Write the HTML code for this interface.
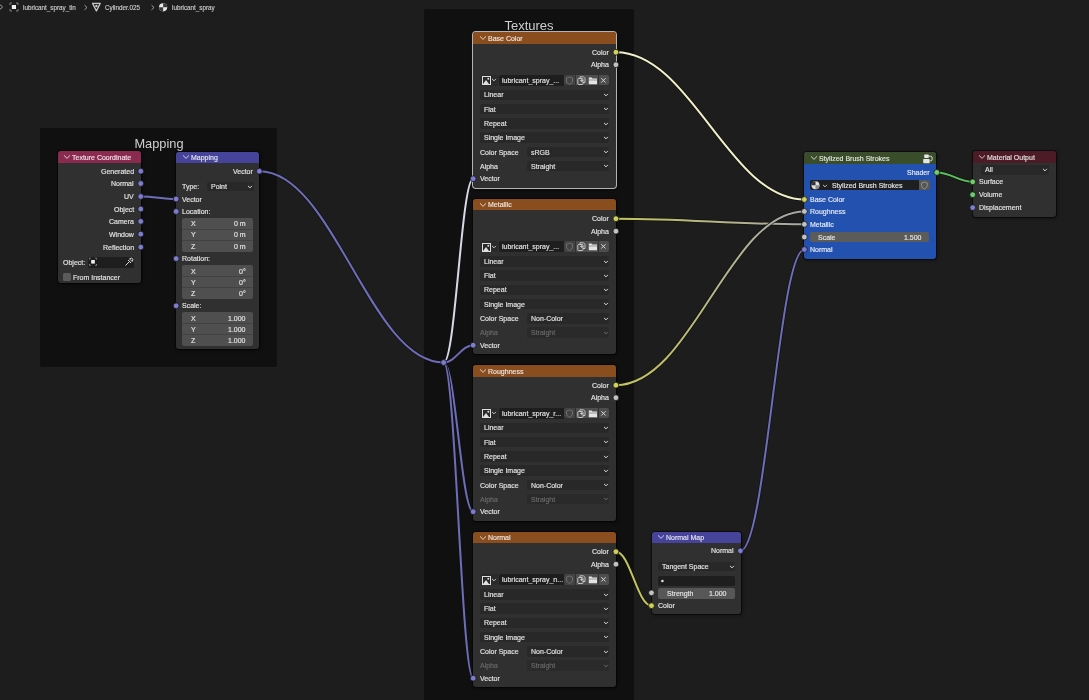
<!DOCTYPE html><html><head><meta charset="utf-8"><style>
html,body{margin:0;padding:0;width:1089px;height:700px;overflow:hidden;background:#1d1d1d;font-family:"Liberation Sans",sans-serif;}
.t{position:absolute;line-height:10px;height:10px;white-space:nowrap;will-change:transform;-webkit-text-stroke:0.15px currentColor;}
.s{position:absolute;overflow:visible;}
</style></head><body>
<div class="t" style="left:23px;top:2.6px;font-size:6.3px;color:#c8c8c8;">lubricant_spray_tin</div>
<svg class="s" style="left:0;top:0" width="200" height="16"><path d="M-1 4.6 Q2 5 2.4 7 Q2 9 -1 9.2" fill="none" stroke="#9a9a9a" stroke-width="1"/><rect x="11.8" y="5" width="4.2" height="4" fill="#f2f2f2"/><path d="M10 5 L10 3 L12 3 M16 3 L18 3 L18 5 M18 9 L18 11 L16 11 M12 11 L10 11 L10 9" fill="none" stroke="#8a8a8a" stroke-width="0.9"/><path d="M84.5 5.2 L87 7.5 L84.5 9.8" fill="none" stroke="#b0b0b0" stroke-width="0.9"/><path d="M92.6 3.4 L100.2 3.4 L96.4 11 Z" fill="none" stroke="#c8c8c8" stroke-width="1.3" stroke-linejoin="round"/><circle cx="96.4" cy="6" r="1.2" fill="#c8c8c8"/><path d="M151.5 5.2 L154 7.5 L151.5 9.8" fill="none" stroke="#b0b0b0" stroke-width="0.9"/><circle cx="163.1" cy="7.3" r="4.1" fill="#e8e8e8"/><path d="M163.1 3.2 A4.1 4.1 0 0 1 167.2 7.3 L163.1 7.3 Z" fill="#3a3a3a"/><path d="M159 7.3 A4.1 4.1 0 0 0 163.1 11.4 L163.1 7.3 Z" fill="#3a3a3a"/></svg>
<div class="t" style="left:105px;top:2.6px;font-size:6.3px;color:#c8c8c8;">Cylinder.025</div>
<div class="t" style="left:172px;top:2.6px;font-size:6.3px;color:#c8c8c8;">lubricant_spray</div>
<div style="position:absolute;left:39.5px;top:127.5px;width:237.5px;height:239px;background:#101010;border-radius:2px;"></div>
<div class="t" style="left:58.5px;width:200px;top:139.1px;font-size:12.8px;color:#d0d0d0;text-align:center;-webkit-text-stroke:0;">Mapping</div>
<div style="position:absolute;left:423.7px;top:8.6px;width:210.3px;height:700px;background:#101010;border-radius:2px;"></div>
<div class="t" style="left:428.5px;width:200px;top:20.6px;font-size:13px;color:#d0d0d0;text-align:center;-webkit-text-stroke:0;">Textures</div>
<svg class="s" style="left:0;top:0" width="1089" height="700"><defs><linearGradient id="g7" gradientUnits="userSpaceOnUse" x1="615.9" y1="218.7" x2="804.4" y2="224.3"><stop offset="0" stop-color="#c4c45e"/><stop offset="1" stop-color="#a8a8a8"/></linearGradient><linearGradient id="g8" gradientUnits="userSpaceOnUse" x1="615.9" y1="385.2" x2="804.4" y2="211.4"><stop offset="0" stop-color="#c4c45e"/><stop offset="1" stop-color="#a8a8a8"/></linearGradient></defs><path d="M140.7 196.5 C154.89999999999998 196.5 162.0 199 176.2 199" fill="none" stroke="#111" stroke-width="3.4"/><path d="M140.7 196.5 C154.89999999999998 196.5 162.0 199 176.2 199" fill="none" stroke="#6d6db8" stroke-width="2"/><path d="M259.3 171.2 C333.06 171.2 369.94 362.5 443.7 362.5" fill="none" stroke="#111" stroke-width="3.4"/><path d="M259.3 171.2 C333.06 171.2 369.94 362.5 443.7 362.5" fill="none" stroke="#6d6db8" stroke-width="2"/><path d="M443.7 362.5 C455.5 362.5 461.4 178.7 473.2 178.7" fill="none" stroke="#111" stroke-width="3.4"/><path d="M443.7 362.5 C455.5 362.5 461.4 178.7 473.2 178.7" fill="none" stroke="#d8d8e8" stroke-width="2"/><path d="M443.7 362.5 C455.5 362.5 461.4 345.2 473.2 345.2" fill="none" stroke="#111" stroke-width="3.4"/><path d="M443.7 362.5 C455.5 362.5 461.4 345.2 473.2 345.2" fill="none" stroke="#6d6db8" stroke-width="2"/><path d="M443.7 362.5 C455.5 362.5 461.4 511.7 473.2 511.7" fill="none" stroke="#111" stroke-width="3.4"/><path d="M443.7 362.5 C455.5 362.5 461.4 511.7 473.2 511.7" fill="none" stroke="#6d6db8" stroke-width="2"/><path d="M443.7 362.5 C455.5 362.5 461.4 678.2 473.2 678.2" fill="none" stroke="#111" stroke-width="3.4"/><path d="M443.7 362.5 C455.5 362.5 461.4 678.2 473.2 678.2" fill="none" stroke="#6d6db8" stroke-width="2"/><path d="M615.9 52.2 C691.3 52.2 729.0 199.5 804.4 199.5" fill="none" stroke="#111" stroke-width="3.4"/><path d="M615.9 52.2 C691.3 52.2 729.0 199.5 804.4 199.5" fill="none" stroke="#f0f0c8" stroke-width="2"/><path d="M615.9 218.7 C691.3 218.7 729.0 224.3 804.4 224.3" fill="none" stroke="#111" stroke-width="3.4"/><path d="M615.9 218.7 C691.3 218.7 729.0 224.3 804.4 224.3" fill="none" stroke="url(#g7)" stroke-width="2"/><path d="M615.9 385.2 C691.3 385.2 729.0 211.4 804.4 211.4" fill="none" stroke="#111" stroke-width="3.4"/><path d="M615.9 385.2 C691.3 385.2 729.0 211.4 804.4 211.4" fill="none" stroke="url(#g8)" stroke-width="2"/><path d="M615.9 551.7 C630.14 551.7 637.26 605.7 651.5 605.7" fill="none" stroke="#111" stroke-width="3.4"/><path d="M615.9 551.7 C630.14 551.7 637.26 605.7 651.5 605.7" fill="none" stroke="#c4c45e" stroke-width="2"/><path d="M740.4 550.8 C766.0 550.8 778.8 249.5 804.4 249.5" fill="none" stroke="#111" stroke-width="3.4"/><path d="M740.4 550.8 C766.0 550.8 778.8 249.5 804.4 249.5" fill="none" stroke="#6d6db8" stroke-width="2"/><path d="M936.8 172.4 C951.16 172.4 958.34 181.8 972.7 181.8" fill="none" stroke="#111" stroke-width="3.4"/><path d="M936.8 172.4 C951.16 172.4 958.34 181.8 972.7 181.8" fill="none" stroke="#5cc05c" stroke-width="2"/></svg>
<div style="position:absolute;left:57.5px;top:151.2px;width:83.2px;height:131.5px;background:#303030;border-radius:3px;overflow:hidden;box-shadow:0 0 0 1px rgba(0,0,0,0.5), 1px 1px 3px 1px rgba(0,0,0,0.3);"><div style="position:absolute;left:0;top:0;width:83.2px;height:11.5px;background:#8a2a4e;"></div></div>
<svg class="s" style="left:62.099999999999994px;top:152.14999999999998px" width="10" height="10"><path d="M2.25 3.636 L5 6.364 L7.75 3.636" fill="none" stroke="rgba(255,255,255,0.8)" stroke-width="0.95" stroke-linecap="round" stroke-linejoin="round"/></svg>
<div class="t" style="left:72.0px;top:152.54999999999998px;font-size:7px;color:rgba(255,255,255,0.82);">Texture Coordinate</div>
<div class="t" style="right:955px;top:166.79999999999998px;font-size:7px;color:#e4e4e4;text-align:right;">Generated</div>
<div class="t" style="right:955px;top:179.1px;font-size:7px;color:#e4e4e4;text-align:right;">Normal</div>
<div class="t" style="right:955px;top:192.1px;font-size:7px;color:#e4e4e4;text-align:right;">UV</div>
<div class="t" style="right:955px;top:204.6px;font-size:7px;color:#e4e4e4;text-align:right;">Object</div>
<div class="t" style="right:955px;top:217.0px;font-size:7px;color:#e4e4e4;text-align:right;">Camera</div>
<div class="t" style="right:955px;top:229.7px;font-size:7px;color:#e4e4e4;text-align:right;">Window</div>
<div class="t" style="right:955px;top:242.7px;font-size:7px;color:#e4e4e4;text-align:right;">Reflection</div>
<div class="t" style="left:63.3px;top:257.8px;font-size:7px;color:#e4e4e4;">Object:</div>
<div style="position:absolute;left:87.6px;top:257px;width:46px;height:10.5px;background:#1e1e1e;border-radius:2px;"></div>
<svg class="s" style="left:87px;top:256px" width="48" height="12"><rect x="4.2" y="4" width="3.6" height="3.6" fill="#f0f0f0"/><path d="M2.5 3.5 L2.5 2.2 L3.8 2.2 M8.2 2.2 L9.5 2.2 L9.5 3.5 M9.5 8 L9.5 9.4 L8.2 9.4 M3.8 9.4 L2.5 9.4 L2.5 8" fill="none" stroke="#9a9a9a" stroke-width="0.8"/><path d="M38.5 9.5 L42 6 M41 4 L44 7 M42.5 2.8 Q44.5 1.5 45.5 2.5 Q46.5 3.5 45.2 5.5 Z" fill="none" stroke="#d8d8d8" stroke-width="1"/></svg>
<div style="position:absolute;left:63px;top:273px;width:8.2px;height:8px;background:#5a5a5a;border-radius:1.5px;"></div>
<div class="t" style="left:73px;top:272.6px;font-size:7px;color:#e4e4e4;">From Instancer</div>
<div style="position:absolute;left:176.2px;top:151.5px;width:83px;height:197.5px;background:#303030;border-radius:3px;overflow:hidden;box-shadow:0 0 0 1px rgba(0,0,0,0.5), 1px 1px 3px 1px rgba(0,0,0,0.3);"><div style="position:absolute;left:0;top:0;width:83px;height:11.5px;background:#45439a;"></div></div>
<svg class="s" style="left:180.79999999999998px;top:152.45px" width="10" height="10"><path d="M2.25 3.636 L5 6.364 L7.75 3.636" fill="none" stroke="rgba(255,255,255,0.8)" stroke-width="0.95" stroke-linecap="round" stroke-linejoin="round"/></svg>
<div class="t" style="left:190.7px;top:152.85px;font-size:7px;color:rgba(255,255,255,0.82);">Mapping</div>
<div class="t" style="right:836.5px;top:166.79999999999998px;font-size:7px;color:#e4e4e4;text-align:right;">Vector</div>
<div class="t" style="left:182px;top:182.1px;font-size:7px;color:#e4e4e4;">Type:</div>
<div style="position:absolute;left:206.5px;top:182.2px;width:47px;height:8.799999999999999px;background:#282828;border-radius:2px;"></div>
<div class="t" style="left:210.5px;top:182.2px;font-size:7px;color:#e4e4e4;">Point</div>
<svg class="s" style="left:245.3px;top:181.9px" width="10" height="10"><path d="M3.3125 4.163 L5 5.837 L6.6875 4.163" fill="none" stroke="#e4e4e4" stroke-width="0.95" stroke-linecap="round" stroke-linejoin="round"/></svg>
<div class="t" style="left:182px;top:194.6px;font-size:7px;color:#e4e4e4;">Vector</div>
<div class="t" style="left:182px;top:207.1px;font-size:7px;color:#e4e4e4;">Location:</div>
<div style="position:absolute;left:182.2px;top:218px;width:70.8px;height:33.5px;background:#4f4f4f;border-radius:2px;"></div>
<div class="t" style="left:191px;top:219.2px;font-size:7px;color:#e4e4e4;">X</div>
<div class="t" style="right:843.8px;top:219.2px;font-size:7px;color:#e4e4e4;text-align:right;">0 m</div>
<div style="position:absolute;left:182.2px;top:228.82px;width:70.8px;height:0.7px;background:#424242;"></div>
<div class="t" style="left:191px;top:230.36999999999998px;font-size:7px;color:#e4e4e4;">Y</div>
<div class="t" style="right:843.8px;top:230.36999999999998px;font-size:7px;color:#e4e4e4;text-align:right;">0 m</div>
<div style="position:absolute;left:182.2px;top:239.99px;width:70.8px;height:0.7px;background:#424242;"></div>
<div class="t" style="left:191px;top:241.54px;font-size:7px;color:#e4e4e4;">Z</div>
<div class="t" style="right:843.8px;top:241.54px;font-size:7px;color:#e4e4e4;text-align:right;">0 m</div>
<div class="t" style="left:182px;top:254.20000000000002px;font-size:7px;color:#e4e4e4;">Rotation:</div>
<div style="position:absolute;left:182.2px;top:265.3px;width:70.8px;height:33.5px;background:#4f4f4f;border-radius:2px;"></div>
<div class="t" style="left:191px;top:266.50000000000006px;font-size:7px;color:#e4e4e4;">X</div>
<div class="t" style="right:843.8px;top:266.50000000000006px;font-size:7px;color:#e4e4e4;text-align:right;">0°</div>
<div style="position:absolute;left:182.2px;top:276.12px;width:70.8px;height:0.7px;background:#424242;"></div>
<div class="t" style="left:191px;top:277.6700000000001px;font-size:7px;color:#e4e4e4;">Y</div>
<div class="t" style="right:843.8px;top:277.6700000000001px;font-size:7px;color:#e4e4e4;text-align:right;">0°</div>
<div style="position:absolute;left:182.2px;top:287.28999999999996px;width:70.8px;height:0.7px;background:#424242;"></div>
<div class="t" style="left:191px;top:288.84000000000003px;font-size:7px;color:#e4e4e4;">Z</div>
<div class="t" style="right:843.8px;top:288.84000000000003px;font-size:7px;color:#e4e4e4;text-align:right;">0°</div>
<div class="t" style="left:182px;top:301.40000000000003px;font-size:7px;color:#e4e4e4;">Scale:</div>
<div style="position:absolute;left:182.2px;top:312.4px;width:70.8px;height:33.5px;background:#4f4f4f;border-radius:2px;"></div>
<div class="t" style="left:191px;top:313.6px;font-size:7px;color:#e4e4e4;">X</div>
<div class="t" style="right:843.8px;top:313.6px;font-size:7px;color:#e4e4e4;text-align:right;">1.000</div>
<div style="position:absolute;left:182.2px;top:323.21999999999997px;width:70.8px;height:0.7px;background:#424242;"></div>
<div class="t" style="left:191px;top:324.77000000000004px;font-size:7px;color:#e4e4e4;">Y</div>
<div class="t" style="right:843.8px;top:324.77000000000004px;font-size:7px;color:#e4e4e4;text-align:right;">1.000</div>
<div style="position:absolute;left:182.2px;top:334.38999999999993px;width:70.8px;height:0.7px;background:#424242;"></div>
<div class="t" style="left:191px;top:335.94px;font-size:7px;color:#e4e4e4;">Z</div>
<div class="t" style="right:843.8px;top:335.94px;font-size:7px;color:#e4e4e4;text-align:right;">1.000</div>
<div style="position:absolute;left:473.2px;top:32.2px;width:143.2px;height:155.5px;background:#303030;border-radius:3px;overflow:hidden;box-shadow:0 0 0 1px #b4b4b4, 1px 1px 3px 1px rgba(0,0,0,0.4);"><div style="position:absolute;left:0;top:0;width:143.2px;height:11.5px;background:#8a4d1e;"></div></div>
<svg class="s" style="left:477.8px;top:33.150000000000006px" width="10" height="10"><path d="M2.25 3.636 L5 6.364 L7.75 3.636" fill="none" stroke="rgba(255,255,255,0.8)" stroke-width="0.95" stroke-linecap="round" stroke-linejoin="round"/></svg>
<div class="t" style="left:487.7px;top:33.550000000000004px;font-size:7px;color:rgba(255,255,255,0.82);">Base Color</div>
<div class="t" style="right:480px;top:47.800000000000004px;font-size:7px;color:#e4e4e4;text-align:right;">Color</div>
<div class="t" style="right:480px;top:60.300000000000004px;font-size:7px;color:#e4e4e4;text-align:right;">Alpha</div>
<div style="position:absolute;left:481px;top:74.5px;width:17px;height:11px;background:#2a2a2a;border-radius:2px;"></div>
<svg class="s" style="left:482px;top:76.0px" width="9" height="9"><rect x="0.5" y="0.5" width="8" height="8" fill="none" stroke="#e0e0e0" stroke-width="1"/><path d="M1 8 L4 4 L7 8 Z" fill="#e0e0e0"/><circle cx="6.3" cy="2.7" r="1" fill="#e0e0e0"/></svg>
<svg class="s" style="left:489px;top:75.3px" width="10" height="10"><path d="M3.3125 4.163 L5 5.837 L6.6875 4.163" fill="none" stroke="#cfcfcf" stroke-width="0.95" stroke-linecap="round" stroke-linejoin="round"/></svg>
<div style="position:absolute;left:498.5px;top:74.5px;width:65px;height:11px;background:#1e1e1e;border-radius:2px 0 0 2px;"></div>
<div class="t" style="left:502px;top:75.6px;font-size:7px;color:#e4e4e4;">lubricant_spray_...</div>
<div style="position:absolute;left:563.8px;top:74.8px;width:11px;height:10.4px;background:#434343;border-radius:2px 0 0 2px;"></div>
<div style="position:absolute;left:575.5px;top:74.8px;width:11px;height:10.4px;background:#4e4e4e;"></div>
<div style="position:absolute;left:587.2px;top:74.8px;width:10.8px;height:10.4px;background:#4e4e4e;"></div>
<div style="position:absolute;left:598.7px;top:74.8px;width:10.5px;height:10.4px;background:#4e4e4e;border-radius:0 2px 2px 0;"></div>
<svg class="s" style="left:564px;top:74.5px" width="46" height="11"><path d="M2.5 3 L5.5 2 L8.5 3 L8.5 6 Q8.5 8 5.5 9.5 Q2.5 8 2.5 6 Z" fill="none" stroke="#6e6e6e" stroke-width="1"/><rect x="13.8" y="3.5" width="5.2" height="6" rx="0.8" fill="none" stroke="#d0d0d0" stroke-width="0.9"/><path d="M16 3.5 L16 1.8 L19.5 1.8 L21 3.3 L21 7.5 L19 7.5" fill="none" stroke="#d0d0d0" stroke-width="0.9"/><path d="M17.6 4 L17.6 7 M16.1 5.5 L19.1 5.5" stroke="#d0d0d0" stroke-width="0.8"/><path d="M24.8 2.6 L27.6 2.6 L28.4 3.6 L33 3.6 L33 9.2 L24.8 9.2 Z" fill="#e4e4e4"/><line x1="24.8" y1="5.0" x2="33" y2="5.0" stroke="#6a6a6a" stroke-width="0.6"/><path d="M37.3 3.2 L41.6 7.5 M41.6 3.2 L37.3 7.5" stroke="#d8d8d8" stroke-width="1"/></svg>
<div style="position:absolute;left:480px;top:89.5px;width:128.7px;height:10.5px;background:#282828;border-radius:2px;"></div>
<div class="t" style="left:484px;top:90.35px;font-size:7px;color:#e4e4e4;">Linear</div>
<svg class="s" style="left:600.5px;top:90.05px" width="10" height="10"><path d="M3.3125 4.163 L5 5.837 L6.6875 4.163" fill="none" stroke="#e4e4e4" stroke-width="0.95" stroke-linecap="round" stroke-linejoin="round"/></svg>
<div style="position:absolute;left:480px;top:103.8px;width:128.7px;height:10.5px;background:#282828;border-radius:2px;"></div>
<div class="t" style="left:484px;top:104.64999999999999px;font-size:7px;color:#e4e4e4;">Flat</div>
<svg class="s" style="left:600.5px;top:104.35px" width="10" height="10"><path d="M3.3125 4.163 L5 5.837 L6.6875 4.163" fill="none" stroke="#e4e4e4" stroke-width="0.95" stroke-linecap="round" stroke-linejoin="round"/></svg>
<div style="position:absolute;left:480px;top:118.1px;width:128.7px;height:10.5px;background:#282828;border-radius:2px;"></div>
<div class="t" style="left:484px;top:118.94999999999999px;font-size:7px;color:#e4e4e4;">Repeat</div>
<svg class="s" style="left:600.5px;top:118.64999999999999px" width="10" height="10"><path d="M3.3125 4.163 L5 5.837 L6.6875 4.163" fill="none" stroke="#e4e4e4" stroke-width="0.95" stroke-linecap="round" stroke-linejoin="round"/></svg>
<div style="position:absolute;left:480px;top:132.4px;width:128.7px;height:10.5px;background:#282828;border-radius:2px;"></div>
<div class="t" style="left:484px;top:133.25px;font-size:7px;color:#e4e4e4;">Single Image</div>
<svg class="s" style="left:600.5px;top:132.95000000000002px" width="10" height="10"><path d="M3.3125 4.163 L5 5.837 L6.6875 4.163" fill="none" stroke="#e4e4e4" stroke-width="0.95" stroke-linecap="round" stroke-linejoin="round"/></svg>
<div class="t" style="left:479.7px;top:147.54999999999998px;font-size:7px;color:#e4e4e4;">Color Space</div>
<div style="position:absolute;left:526.7px;top:146.7px;width:82px;height:10.5px;background:#282828;border-radius:2px;"></div>
<div class="t" style="left:530.7px;top:147.54999999999998px;font-size:7px;color:#e4e4e4;">sRGB</div>
<svg class="s" style="left:600.5px;top:147.25px" width="10" height="10"><path d="M3.3125 4.163 L5 5.837 L6.6875 4.163" fill="none" stroke="#e4e4e4" stroke-width="0.95" stroke-linecap="round" stroke-linejoin="round"/></svg>
<div class="t" style="left:479.7px;top:161.64999999999998px;font-size:7px;color:#e4e4e4;">Alpha</div>
<div style="position:absolute;left:526.7px;top:160.79999999999998px;width:82px;height:10.5px;background:#282828;border-radius:2px;"></div>
<div class="t" style="left:530.7px;top:161.64999999999998px;font-size:7px;color:#e4e4e4;">Straight</div>
<svg class="s" style="left:600.5px;top:161.35px" width="10" height="10"><path d="M3.3125 4.163 L5 5.837 L6.6875 4.163" fill="none" stroke="#e4e4e4" stroke-width="0.95" stroke-linecap="round" stroke-linejoin="round"/></svg>
<div class="t" style="left:479.7px;top:174.29999999999998px;font-size:7px;color:#e4e4e4;">Vector</div>
<div style="position:absolute;left:473.2px;top:198.7px;width:143.2px;height:155.5px;background:#303030;border-radius:3px;overflow:hidden;box-shadow:0 0 0 1px rgba(0,0,0,0.5), 1px 1px 3px 1px rgba(0,0,0,0.3);"><div style="position:absolute;left:0;top:0;width:143.2px;height:11.5px;background:#8a4d1e;"></div></div>
<svg class="s" style="left:477.8px;top:199.64999999999998px" width="10" height="10"><path d="M2.25 3.636 L5 6.364 L7.75 3.636" fill="none" stroke="rgba(255,255,255,0.8)" stroke-width="0.95" stroke-linecap="round" stroke-linejoin="round"/></svg>
<div class="t" style="left:487.7px;top:200.04999999999998px;font-size:7px;color:rgba(255,255,255,0.82);">Metallic</div>
<div class="t" style="right:480px;top:214.29999999999998px;font-size:7px;color:#e4e4e4;text-align:right;">Color</div>
<div class="t" style="right:480px;top:226.79999999999998px;font-size:7px;color:#e4e4e4;text-align:right;">Alpha</div>
<div style="position:absolute;left:481px;top:241.0px;width:17px;height:11px;background:#2a2a2a;border-radius:2px;"></div>
<svg class="s" style="left:482px;top:242.5px" width="9" height="9"><rect x="0.5" y="0.5" width="8" height="8" fill="none" stroke="#e0e0e0" stroke-width="1"/><path d="M1 8 L4 4 L7 8 Z" fill="#e0e0e0"/><circle cx="6.3" cy="2.7" r="1" fill="#e0e0e0"/></svg>
<svg class="s" style="left:489px;top:241.8px" width="10" height="10"><path d="M3.3125 4.163 L5 5.837 L6.6875 4.163" fill="none" stroke="#cfcfcf" stroke-width="0.95" stroke-linecap="round" stroke-linejoin="round"/></svg>
<div style="position:absolute;left:498.5px;top:241.0px;width:65px;height:11px;background:#1e1e1e;border-radius:2px 0 0 2px;"></div>
<div class="t" style="left:502px;top:242.1px;font-size:7px;color:#e4e4e4;">lubricant_spray_...</div>
<div style="position:absolute;left:563.8px;top:241.3px;width:11px;height:10.4px;background:#434343;border-radius:2px 0 0 2px;"></div>
<div style="position:absolute;left:575.5px;top:241.3px;width:11px;height:10.4px;background:#4e4e4e;"></div>
<div style="position:absolute;left:587.2px;top:241.3px;width:10.8px;height:10.4px;background:#4e4e4e;"></div>
<div style="position:absolute;left:598.7px;top:241.3px;width:10.5px;height:10.4px;background:#4e4e4e;border-radius:0 2px 2px 0;"></div>
<svg class="s" style="left:564px;top:241.0px" width="46" height="11"><path d="M2.5 3 L5.5 2 L8.5 3 L8.5 6 Q8.5 8 5.5 9.5 Q2.5 8 2.5 6 Z" fill="none" stroke="#6e6e6e" stroke-width="1"/><rect x="13.8" y="3.5" width="5.2" height="6" rx="0.8" fill="none" stroke="#d0d0d0" stroke-width="0.9"/><path d="M16 3.5 L16 1.8 L19.5 1.8 L21 3.3 L21 7.5 L19 7.5" fill="none" stroke="#d0d0d0" stroke-width="0.9"/><path d="M17.6 4 L17.6 7 M16.1 5.5 L19.1 5.5" stroke="#d0d0d0" stroke-width="0.8"/><path d="M24.8 2.6 L27.6 2.6 L28.4 3.6 L33 3.6 L33 9.2 L24.8 9.2 Z" fill="#e4e4e4"/><line x1="24.8" y1="5.0" x2="33" y2="5.0" stroke="#6a6a6a" stroke-width="0.6"/><path d="M37.3 3.2 L41.6 7.5 M41.6 3.2 L37.3 7.5" stroke="#d8d8d8" stroke-width="1"/></svg>
<div style="position:absolute;left:480px;top:256.0px;width:128.7px;height:10.5px;background:#282828;border-radius:2px;"></div>
<div class="t" style="left:484px;top:256.85px;font-size:7px;color:#e4e4e4;">Linear</div>
<svg class="s" style="left:600.5px;top:256.55px" width="10" height="10"><path d="M3.3125 4.163 L5 5.837 L6.6875 4.163" fill="none" stroke="#e4e4e4" stroke-width="0.95" stroke-linecap="round" stroke-linejoin="round"/></svg>
<div style="position:absolute;left:480px;top:270.3px;width:128.7px;height:10.5px;background:#282828;border-radius:2px;"></div>
<div class="t" style="left:484px;top:271.15000000000003px;font-size:7px;color:#e4e4e4;">Flat</div>
<svg class="s" style="left:600.5px;top:270.85px" width="10" height="10"><path d="M3.3125 4.163 L5 5.837 L6.6875 4.163" fill="none" stroke="#e4e4e4" stroke-width="0.95" stroke-linecap="round" stroke-linejoin="round"/></svg>
<div style="position:absolute;left:480px;top:284.6px;width:128.7px;height:10.5px;background:#282828;border-radius:2px;"></div>
<div class="t" style="left:484px;top:285.45000000000005px;font-size:7px;color:#e4e4e4;">Repeat</div>
<svg class="s" style="left:600.5px;top:285.15000000000003px" width="10" height="10"><path d="M3.3125 4.163 L5 5.837 L6.6875 4.163" fill="none" stroke="#e4e4e4" stroke-width="0.95" stroke-linecap="round" stroke-linejoin="round"/></svg>
<div style="position:absolute;left:480px;top:298.9px;width:128.7px;height:10.5px;background:#282828;border-radius:2px;"></div>
<div class="t" style="left:484px;top:299.75px;font-size:7px;color:#e4e4e4;">Single Image</div>
<svg class="s" style="left:600.5px;top:299.45px" width="10" height="10"><path d="M3.3125 4.163 L5 5.837 L6.6875 4.163" fill="none" stroke="#e4e4e4" stroke-width="0.95" stroke-linecap="round" stroke-linejoin="round"/></svg>
<div class="t" style="left:479.7px;top:314.05px;font-size:7px;color:#e4e4e4;">Color Space</div>
<div style="position:absolute;left:526.7px;top:313.2px;width:82px;height:10.5px;background:#282828;border-radius:2px;"></div>
<div class="t" style="left:530.7px;top:314.05px;font-size:7px;color:#e4e4e4;">Non-Color</div>
<svg class="s" style="left:600.5px;top:313.75px" width="10" height="10"><path d="M3.3125 4.163 L5 5.837 L6.6875 4.163" fill="none" stroke="#e4e4e4" stroke-width="0.95" stroke-linecap="round" stroke-linejoin="round"/></svg>
<div class="t" style="left:479.7px;top:328.15000000000003px;font-size:7px;color:#6a6a6a;">Alpha</div>
<div style="position:absolute;left:526.7px;top:327.3px;width:82px;height:10.5px;background:#2a2a2a;border-radius:2px;"></div>
<div class="t" style="left:530.7px;top:328.15000000000003px;font-size:7px;color:#6a6a6a;">Straight</div>
<svg class="s" style="left:600.5px;top:327.85px" width="10" height="10"><path d="M3.3125 4.163 L5 5.837 L6.6875 4.163" fill="none" stroke="#6a6a6a" stroke-width="0.95" stroke-linecap="round" stroke-linejoin="round"/></svg>
<div class="t" style="left:479.7px;top:340.8px;font-size:7px;color:#e4e4e4;">Vector</div>
<div style="position:absolute;left:473.2px;top:365.2px;width:143.2px;height:155.5px;background:#303030;border-radius:3px;overflow:hidden;box-shadow:0 0 0 1px rgba(0,0,0,0.5), 1px 1px 3px 1px rgba(0,0,0,0.3);"><div style="position:absolute;left:0;top:0;width:143.2px;height:11.5px;background:#8a4d1e;"></div></div>
<svg class="s" style="left:477.8px;top:366.15px" width="10" height="10"><path d="M2.25 3.636 L5 6.364 L7.75 3.636" fill="none" stroke="rgba(255,255,255,0.8)" stroke-width="0.95" stroke-linecap="round" stroke-linejoin="round"/></svg>
<div class="t" style="left:487.7px;top:366.55px;font-size:7px;color:rgba(255,255,255,0.82);">Roughness</div>
<div class="t" style="right:480px;top:380.8px;font-size:7px;color:#e4e4e4;text-align:right;">Color</div>
<div class="t" style="right:480px;top:393.3px;font-size:7px;color:#e4e4e4;text-align:right;">Alpha</div>
<div style="position:absolute;left:481px;top:407.5px;width:17px;height:11px;background:#2a2a2a;border-radius:2px;"></div>
<svg class="s" style="left:482px;top:409.0px" width="9" height="9"><rect x="0.5" y="0.5" width="8" height="8" fill="none" stroke="#e0e0e0" stroke-width="1"/><path d="M1 8 L4 4 L7 8 Z" fill="#e0e0e0"/><circle cx="6.3" cy="2.7" r="1" fill="#e0e0e0"/></svg>
<svg class="s" style="left:489px;top:408.3px" width="10" height="10"><path d="M3.3125 4.163 L5 5.837 L6.6875 4.163" fill="none" stroke="#cfcfcf" stroke-width="0.95" stroke-linecap="round" stroke-linejoin="round"/></svg>
<div style="position:absolute;left:498.5px;top:407.5px;width:65px;height:11px;background:#1e1e1e;border-radius:2px 0 0 2px;"></div>
<div class="t" style="left:502px;top:408.6px;font-size:7px;color:#e4e4e4;">lubricant_spray_r...</div>
<div style="position:absolute;left:563.8px;top:407.8px;width:11px;height:10.4px;background:#434343;border-radius:2px 0 0 2px;"></div>
<div style="position:absolute;left:575.5px;top:407.8px;width:11px;height:10.4px;background:#4e4e4e;"></div>
<div style="position:absolute;left:587.2px;top:407.8px;width:10.8px;height:10.4px;background:#4e4e4e;"></div>
<div style="position:absolute;left:598.7px;top:407.8px;width:10.5px;height:10.4px;background:#4e4e4e;border-radius:0 2px 2px 0;"></div>
<svg class="s" style="left:564px;top:407.5px" width="46" height="11"><path d="M2.5 3 L5.5 2 L8.5 3 L8.5 6 Q8.5 8 5.5 9.5 Q2.5 8 2.5 6 Z" fill="none" stroke="#6e6e6e" stroke-width="1"/><rect x="13.8" y="3.5" width="5.2" height="6" rx="0.8" fill="none" stroke="#d0d0d0" stroke-width="0.9"/><path d="M16 3.5 L16 1.8 L19.5 1.8 L21 3.3 L21 7.5 L19 7.5" fill="none" stroke="#d0d0d0" stroke-width="0.9"/><path d="M17.6 4 L17.6 7 M16.1 5.5 L19.1 5.5" stroke="#d0d0d0" stroke-width="0.8"/><path d="M24.8 2.6 L27.6 2.6 L28.4 3.6 L33 3.6 L33 9.2 L24.8 9.2 Z" fill="#e4e4e4"/><line x1="24.8" y1="5.0" x2="33" y2="5.0" stroke="#6a6a6a" stroke-width="0.6"/><path d="M37.3 3.2 L41.6 7.5 M41.6 3.2 L37.3 7.5" stroke="#d8d8d8" stroke-width="1"/></svg>
<div style="position:absolute;left:480px;top:422.5px;width:128.7px;height:10.5px;background:#282828;border-radius:2px;"></div>
<div class="t" style="left:484px;top:423.35px;font-size:7px;color:#e4e4e4;">Linear</div>
<svg class="s" style="left:600.5px;top:423.05px" width="10" height="10"><path d="M3.3125 4.163 L5 5.837 L6.6875 4.163" fill="none" stroke="#e4e4e4" stroke-width="0.95" stroke-linecap="round" stroke-linejoin="round"/></svg>
<div style="position:absolute;left:480px;top:436.8px;width:128.7px;height:10.5px;background:#282828;border-radius:2px;"></div>
<div class="t" style="left:484px;top:437.65000000000003px;font-size:7px;color:#e4e4e4;">Flat</div>
<svg class="s" style="left:600.5px;top:437.35px" width="10" height="10"><path d="M3.3125 4.163 L5 5.837 L6.6875 4.163" fill="none" stroke="#e4e4e4" stroke-width="0.95" stroke-linecap="round" stroke-linejoin="round"/></svg>
<div style="position:absolute;left:480px;top:451.1px;width:128.7px;height:10.5px;background:#282828;border-radius:2px;"></div>
<div class="t" style="left:484px;top:451.95000000000005px;font-size:7px;color:#e4e4e4;">Repeat</div>
<svg class="s" style="left:600.5px;top:451.65000000000003px" width="10" height="10"><path d="M3.3125 4.163 L5 5.837 L6.6875 4.163" fill="none" stroke="#e4e4e4" stroke-width="0.95" stroke-linecap="round" stroke-linejoin="round"/></svg>
<div style="position:absolute;left:480px;top:465.4px;width:128.7px;height:10.5px;background:#282828;border-radius:2px;"></div>
<div class="t" style="left:484px;top:466.25px;font-size:7px;color:#e4e4e4;">Single Image</div>
<svg class="s" style="left:600.5px;top:465.95px" width="10" height="10"><path d="M3.3125 4.163 L5 5.837 L6.6875 4.163" fill="none" stroke="#e4e4e4" stroke-width="0.95" stroke-linecap="round" stroke-linejoin="round"/></svg>
<div class="t" style="left:479.7px;top:480.55px;font-size:7px;color:#e4e4e4;">Color Space</div>
<div style="position:absolute;left:526.7px;top:479.7px;width:82px;height:10.5px;background:#282828;border-radius:2px;"></div>
<div class="t" style="left:530.7px;top:480.55px;font-size:7px;color:#e4e4e4;">Non-Color</div>
<svg class="s" style="left:600.5px;top:480.25px" width="10" height="10"><path d="M3.3125 4.163 L5 5.837 L6.6875 4.163" fill="none" stroke="#e4e4e4" stroke-width="0.95" stroke-linecap="round" stroke-linejoin="round"/></svg>
<div class="t" style="left:479.7px;top:494.65000000000003px;font-size:7px;color:#6a6a6a;">Alpha</div>
<div style="position:absolute;left:526.7px;top:493.8px;width:82px;height:10.5px;background:#2a2a2a;border-radius:2px;"></div>
<div class="t" style="left:530.7px;top:494.65000000000003px;font-size:7px;color:#6a6a6a;">Straight</div>
<svg class="s" style="left:600.5px;top:494.35px" width="10" height="10"><path d="M3.3125 4.163 L5 5.837 L6.6875 4.163" fill="none" stroke="#6a6a6a" stroke-width="0.95" stroke-linecap="round" stroke-linejoin="round"/></svg>
<div class="t" style="left:479.7px;top:507.3px;font-size:7px;color:#e4e4e4;">Vector</div>
<div style="position:absolute;left:473.2px;top:531.7px;width:143.2px;height:155.5px;background:#303030;border-radius:3px;overflow:hidden;box-shadow:0 0 0 1px rgba(0,0,0,0.5), 1px 1px 3px 1px rgba(0,0,0,0.3);"><div style="position:absolute;left:0;top:0;width:143.2px;height:11.5px;background:#8a4d1e;"></div></div>
<svg class="s" style="left:477.8px;top:532.6500000000001px" width="10" height="10"><path d="M2.25 3.636 L5 6.364 L7.75 3.636" fill="none" stroke="rgba(255,255,255,0.8)" stroke-width="0.95" stroke-linecap="round" stroke-linejoin="round"/></svg>
<div class="t" style="left:487.7px;top:533.0500000000001px;font-size:7px;color:rgba(255,255,255,0.82);">Normal</div>
<div class="t" style="right:480px;top:547.3000000000001px;font-size:7px;color:#e4e4e4;text-align:right;">Color</div>
<div class="t" style="right:480px;top:559.8000000000001px;font-size:7px;color:#e4e4e4;text-align:right;">Alpha</div>
<div style="position:absolute;left:481px;top:574.0px;width:17px;height:11px;background:#2a2a2a;border-radius:2px;"></div>
<svg class="s" style="left:482px;top:575.5px" width="9" height="9"><rect x="0.5" y="0.5" width="8" height="8" fill="none" stroke="#e0e0e0" stroke-width="1"/><path d="M1 8 L4 4 L7 8 Z" fill="#e0e0e0"/><circle cx="6.3" cy="2.7" r="1" fill="#e0e0e0"/></svg>
<svg class="s" style="left:489px;top:574.8px" width="10" height="10"><path d="M3.3125 4.163 L5 5.837 L6.6875 4.163" fill="none" stroke="#cfcfcf" stroke-width="0.95" stroke-linecap="round" stroke-linejoin="round"/></svg>
<div style="position:absolute;left:498.5px;top:574.0px;width:65px;height:11px;background:#1e1e1e;border-radius:2px 0 0 2px;"></div>
<div class="t" style="left:502px;top:575.1px;font-size:7px;color:#e4e4e4;">lubricant_spray_n...</div>
<div style="position:absolute;left:563.8px;top:574.3px;width:11px;height:10.4px;background:#434343;border-radius:2px 0 0 2px;"></div>
<div style="position:absolute;left:575.5px;top:574.3px;width:11px;height:10.4px;background:#4e4e4e;"></div>
<div style="position:absolute;left:587.2px;top:574.3px;width:10.8px;height:10.4px;background:#4e4e4e;"></div>
<div style="position:absolute;left:598.7px;top:574.3px;width:10.5px;height:10.4px;background:#4e4e4e;border-radius:0 2px 2px 0;"></div>
<svg class="s" style="left:564px;top:574.0px" width="46" height="11"><path d="M2.5 3 L5.5 2 L8.5 3 L8.5 6 Q8.5 8 5.5 9.5 Q2.5 8 2.5 6 Z" fill="none" stroke="#6e6e6e" stroke-width="1"/><rect x="13.8" y="3.5" width="5.2" height="6" rx="0.8" fill="none" stroke="#d0d0d0" stroke-width="0.9"/><path d="M16 3.5 L16 1.8 L19.5 1.8 L21 3.3 L21 7.5 L19 7.5" fill="none" stroke="#d0d0d0" stroke-width="0.9"/><path d="M17.6 4 L17.6 7 M16.1 5.5 L19.1 5.5" stroke="#d0d0d0" stroke-width="0.8"/><path d="M24.8 2.6 L27.6 2.6 L28.4 3.6 L33 3.6 L33 9.2 L24.8 9.2 Z" fill="#e4e4e4"/><line x1="24.8" y1="5.0" x2="33" y2="5.0" stroke="#6a6a6a" stroke-width="0.6"/><path d="M37.3 3.2 L41.6 7.5 M41.6 3.2 L37.3 7.5" stroke="#d8d8d8" stroke-width="1"/></svg>
<div style="position:absolute;left:480px;top:589.0px;width:128.7px;height:10.5px;background:#282828;border-radius:2px;"></div>
<div class="t" style="left:484px;top:589.85px;font-size:7px;color:#e4e4e4;">Linear</div>
<svg class="s" style="left:600.5px;top:589.55px" width="10" height="10"><path d="M3.3125 4.163 L5 5.837 L6.6875 4.163" fill="none" stroke="#e4e4e4" stroke-width="0.95" stroke-linecap="round" stroke-linejoin="round"/></svg>
<div style="position:absolute;left:480px;top:603.3px;width:128.7px;height:10.5px;background:#282828;border-radius:2px;"></div>
<div class="t" style="left:484px;top:604.15px;font-size:7px;color:#e4e4e4;">Flat</div>
<svg class="s" style="left:600.5px;top:603.8499999999999px" width="10" height="10"><path d="M3.3125 4.163 L5 5.837 L6.6875 4.163" fill="none" stroke="#e4e4e4" stroke-width="0.95" stroke-linecap="round" stroke-linejoin="round"/></svg>
<div style="position:absolute;left:480px;top:617.6px;width:128.7px;height:10.5px;background:#282828;border-radius:2px;"></div>
<div class="t" style="left:484px;top:618.45px;font-size:7px;color:#e4e4e4;">Repeat</div>
<svg class="s" style="left:600.5px;top:618.15px" width="10" height="10"><path d="M3.3125 4.163 L5 5.837 L6.6875 4.163" fill="none" stroke="#e4e4e4" stroke-width="0.95" stroke-linecap="round" stroke-linejoin="round"/></svg>
<div style="position:absolute;left:480px;top:631.9px;width:128.7px;height:10.5px;background:#282828;border-radius:2px;"></div>
<div class="t" style="left:484px;top:632.75px;font-size:7px;color:#e4e4e4;">Single Image</div>
<svg class="s" style="left:600.5px;top:632.4499999999999px" width="10" height="10"><path d="M3.3125 4.163 L5 5.837 L6.6875 4.163" fill="none" stroke="#e4e4e4" stroke-width="0.95" stroke-linecap="round" stroke-linejoin="round"/></svg>
<div class="t" style="left:479.7px;top:647.0500000000001px;font-size:7px;color:#e4e4e4;">Color Space</div>
<div style="position:absolute;left:526.7px;top:646.2px;width:82px;height:10.5px;background:#282828;border-radius:2px;"></div>
<div class="t" style="left:530.7px;top:647.0500000000001px;font-size:7px;color:#e4e4e4;">Non-Color</div>
<svg class="s" style="left:600.5px;top:646.75px" width="10" height="10"><path d="M3.3125 4.163 L5 5.837 L6.6875 4.163" fill="none" stroke="#e4e4e4" stroke-width="0.95" stroke-linecap="round" stroke-linejoin="round"/></svg>
<div class="t" style="left:479.7px;top:661.1500000000001px;font-size:7px;color:#6a6a6a;">Alpha</div>
<div style="position:absolute;left:526.7px;top:660.3000000000001px;width:82px;height:10.5px;background:#2a2a2a;border-radius:2px;"></div>
<div class="t" style="left:530.7px;top:661.1500000000001px;font-size:7px;color:#6a6a6a;">Straight</div>
<svg class="s" style="left:600.5px;top:660.85px" width="10" height="10"><path d="M3.3125 4.163 L5 5.837 L6.6875 4.163" fill="none" stroke="#6a6a6a" stroke-width="0.95" stroke-linecap="round" stroke-linejoin="round"/></svg>
<div class="t" style="left:479.7px;top:673.8000000000001px;font-size:7px;color:#e4e4e4;">Vector</div>
<div style="position:absolute;left:651.5px;top:531.5px;width:89.5px;height:82.5px;background:#303030;border-radius:3px;overflow:hidden;box-shadow:0 0 0 1px rgba(0,0,0,0.5), 1px 1px 3px 1px rgba(0,0,0,0.3);"><div style="position:absolute;left:0;top:0;width:89.5px;height:11.5px;background:#45439a;"></div></div>
<svg class="s" style="left:656.1px;top:532.45px" width="10" height="10"><path d="M2.25 3.636 L5 6.364 L7.75 3.636" fill="none" stroke="rgba(255,255,255,0.8)" stroke-width="0.95" stroke-linecap="round" stroke-linejoin="round"/></svg>
<div class="t" style="left:666.0px;top:532.85px;font-size:7px;color:rgba(255,255,255,0.82);">Normal Map</div>
<div class="t" style="right:355px;top:546.4px;font-size:7px;color:#e4e4e4;text-align:right;">Normal</div>
<div style="position:absolute;left:658.3px;top:561.6px;width:76.7px;height:9.6px;background:#282828;border-radius:2px;"></div>
<div class="t" style="left:662.3px;top:562.0px;font-size:7px;color:#e4e4e4;">Tangent Space</div>
<svg class="s" style="left:726.8px;top:561.6999999999999px" width="10" height="10"><path d="M3.3125 4.163 L5 5.837 L6.6875 4.163" fill="none" stroke="#e4e4e4" stroke-width="0.95" stroke-linecap="round" stroke-linejoin="round"/></svg>
<div style="position:absolute;left:658.3px;top:575.9px;width:76.7px;height:10.1px;background:#1e1e1e;border-radius:2px;"></div>
<svg class="s" style="left:658px;top:576px" width="10" height="10"><circle cx="4.4" cy="5" r="1.3" fill="#e0e0e0"/></svg>
<div style="position:absolute;left:658.3px;top:588px;width:76.7px;height:11px;background:#575757;border-radius:2px;"></div>
<div class="t" style="left:667px;top:589.1px;font-size:7px;color:#e4e4e4;">Strength</div>
<div class="t" style="right:362px;top:589.1px;font-size:7px;color:#e4e4e4;text-align:right;">1.000</div>
<div class="t" style="left:657.5px;top:601.3000000000001px;font-size:7px;color:#e4e4e4;">Color</div>
<div style="position:absolute;left:804.4px;top:152.2px;width:131.5px;height:106.7px;background:#2351b0;border-radius:3px;overflow:hidden;box-shadow:0 0 0 1px rgba(0,0,0,0.5), 1px 1px 3px 1px rgba(0,0,0,0.3);"><div style="position:absolute;left:0;top:0;width:131.5px;height:12px;background:#394d2a;"></div></div>
<svg class="s" style="left:809.0px;top:153.39999999999998px" width="10" height="10"><path d="M2.25 3.636 L5 6.364 L7.75 3.636" fill="none" stroke="rgba(255,255,255,0.8)" stroke-width="0.95" stroke-linecap="round" stroke-linejoin="round"/></svg>
<div class="t" style="left:818.9px;top:153.79999999999998px;font-size:7px;color:rgba(255,255,255,0.82);">Stylized Brush Strokes</div>
<div class="t" style="right:159.5px;top:168.0px;font-size:7px;color:#e6ecf5;text-align:right;">Shader</div>
<div style="position:absolute;left:809.6px;top:180px;width:109.2px;height:10.4px;background:#1e1f22;border-radius:2px 0 0 2px;"></div>
<div style="position:absolute;left:918.8px;top:180px;width:10.8px;height:10.4px;background:#565656;border-radius:0 2px 2px 0;"></div>
<svg class="s" style="left:810px;top:180px" width="14" height="11"><circle cx="5.5" cy="5.2" r="4" fill="#ddd"/><path d="M5.5 1.2 A4 4 0 0 0 1.5 5.2 L5.5 5.2 Z" fill="#333"/><path d="M5.5 5.2 L9.5 5.2 A4 4 0 0 1 5.5 9.2Z" fill="#888"/></svg>
<svg class="s" style="left:820px;top:180.5px" width="10" height="10"><path d="M3.3125 4.163 L5 5.837 L6.6875 4.163" fill="none" stroke="#cfcfcf" stroke-width="0.95" stroke-linecap="round" stroke-linejoin="round"/></svg>
<div class="t" style="left:832px;top:180.79999999999998px;font-size:7px;color:#e4e4e4;">Stylized Brush Strokes</div>
<svg class="s" style="left:919px;top:180px" width="11" height="11"><path d="M2.5 3 L5.4 2 L8.3 3 L8.3 5.5 Q8.3 7.5 5.4 9 Q2.5 7.5 2.5 5.5 Z" fill="none" stroke="#999" stroke-width="0.9"/></svg>
<div class="t" style="left:809.5px;top:195.1px;font-size:7px;color:#e6ecf5;">Base Color</div>
<div class="t" style="left:809.5px;top:207.0px;font-size:7px;color:#e6ecf5;">Roughness</div>
<div class="t" style="left:809.5px;top:219.9px;font-size:7px;color:#e6ecf5;">Metallic</div>
<div class="t" style="left:809.5px;top:245.1px;font-size:7px;color:#e6ecf5;">Normal</div>
<div style="position:absolute;left:809.6px;top:232.3px;width:119.4px;height:10px;background:#5b5b5a;border-radius:2px;"></div>
<div class="t" style="left:818px;top:232.9px;font-size:7px;color:#e4e4e4;">Scale</div>
<div class="t" style="right:167px;top:232.9px;font-size:7px;color:#e4e4e4;text-align:right;">1.500</div>
<svg class="s" style="left:922px;top:153px" width="12" height="12"><rect x="2.2" y="1.4" width="4.6" height="3.6" rx="0.8" fill="#e6e6e6"/><rect x="1.2" y="6" width="6.5" height="4.2" rx="0.8" fill="#e6e6e6"/><path d="M7 3.2 L8.6 3.2 Q10.2 3.2 10.2 5.2 L10.2 6.2 Q10.2 8 8.2 8" fill="none" stroke="#e6e6e6" stroke-width="1"/></svg>
<div style="position:absolute;left:972.8px;top:151.3px;width:83.4px;height:65.7px;background:#303030;border-radius:3px;overflow:hidden;box-shadow:0 0 0 1px rgba(0,0,0,0.5), 1px 1px 3px 1px rgba(0,0,0,0.3);"><div style="position:absolute;left:0;top:0;width:83.4px;height:11.4px;background:#4c1b26;"></div></div>
<svg class="s" style="left:977.4px;top:152.2px" width="10" height="10"><path d="M2.25 3.636 L5 6.364 L7.75 3.636" fill="none" stroke="rgba(255,255,255,0.8)" stroke-width="0.95" stroke-linecap="round" stroke-linejoin="round"/></svg>
<div class="t" style="left:987.3px;top:152.6px;font-size:7px;color:rgba(255,255,255,0.82);">Material Output</div>
<div style="position:absolute;left:980.6px;top:165px;width:68px;height:9.7px;background:#282828;border-radius:2px;"></div>
<div class="t" style="left:984.6px;top:165.45px;font-size:7px;color:#e4e4e4;">All</div>
<svg class="s" style="left:1040.3999999999999px;top:165.15px" width="10" height="10"><path d="M3.3125 4.163 L5 5.837 L6.6875 4.163" fill="none" stroke="#e4e4e4" stroke-width="0.95" stroke-linecap="round" stroke-linejoin="round"/></svg>
<div class="t" style="left:978.5px;top:177.4px;font-size:7px;color:#e4e4e4;">Surface</div>
<div class="t" style="left:978.5px;top:190.29999999999998px;font-size:7px;color:#e4e4e4;">Volume</div>
<div class="t" style="left:978.5px;top:203.2px;font-size:7px;color:#e4e4e4;">Displacement</div>
<svg class="s" style="left:0;top:0" width="1089" height="700"><circle cx="140.7" cy="171.2" r="2.9" fill="#7c7cd2" stroke="#151515" stroke-width="0.8"/><circle cx="140.7" cy="183.5" r="2.9" fill="#7c7cd2" stroke="#151515" stroke-width="0.8"/><circle cx="140.7" cy="196.5" r="2.9" fill="#7c7cd2" stroke="#151515" stroke-width="0.8"/><circle cx="140.7" cy="209" r="2.9" fill="#7c7cd2" stroke="#151515" stroke-width="0.8"/><circle cx="140.7" cy="221.4" r="2.9" fill="#7c7cd2" stroke="#151515" stroke-width="0.8"/><circle cx="140.7" cy="234.1" r="2.9" fill="#7c7cd2" stroke="#151515" stroke-width="0.8"/><circle cx="140.7" cy="247.1" r="2.9" fill="#7c7cd2" stroke="#151515" stroke-width="0.8"/><circle cx="259.3" cy="171.2" r="2.9" fill="#7c7cd2" stroke="#151515" stroke-width="0.8"/><circle cx="176.2" cy="199" r="2.9" fill="#7c7cd2" stroke="#151515" stroke-width="0.8"/><circle cx="176.2" cy="211.5" r="2.9" fill="#7c7cd2" stroke="#151515" stroke-width="0.8"/><circle cx="176.2" cy="258.6" r="2.9" fill="#7c7cd2" stroke="#151515" stroke-width="0.8"/><circle cx="176.2" cy="305.8" r="2.9" fill="#7c7cd2" stroke="#151515" stroke-width="0.8"/><circle cx="615.9" cy="52.2" r="2.9" fill="#d0d05c" stroke="#151515" stroke-width="0.8"/><circle cx="615.9" cy="64.7" r="2.9" fill="#c2c2c2" stroke="#151515" stroke-width="0.8"/><circle cx="473.2" cy="178.7" r="2.9" fill="#7c7cd2" stroke="#151515" stroke-width="0.8"/><circle cx="615.9" cy="218.7" r="2.9" fill="#d0d05c" stroke="#151515" stroke-width="0.8"/><circle cx="615.9" cy="231.2" r="2.9" fill="#c2c2c2" stroke="#151515" stroke-width="0.8"/><circle cx="473.2" cy="345.2" r="2.9" fill="#7c7cd2" stroke="#151515" stroke-width="0.8"/><circle cx="615.9" cy="385.2" r="2.9" fill="#d0d05c" stroke="#151515" stroke-width="0.8"/><circle cx="615.9" cy="397.7" r="2.9" fill="#c2c2c2" stroke="#151515" stroke-width="0.8"/><circle cx="473.2" cy="511.7" r="2.9" fill="#7c7cd2" stroke="#151515" stroke-width="0.8"/><circle cx="615.9" cy="551.7" r="2.9" fill="#d0d05c" stroke="#151515" stroke-width="0.8"/><circle cx="615.9" cy="564.2" r="2.9" fill="#c2c2c2" stroke="#151515" stroke-width="0.8"/><circle cx="473.2" cy="678.2" r="2.9" fill="#7c7cd2" stroke="#151515" stroke-width="0.8"/><circle cx="740.4" cy="550.8" r="2.9" fill="#7c7cd2" stroke="#151515" stroke-width="0.8"/><circle cx="651.5" cy="592.8" r="2.9" fill="#c2c2c2" stroke="#151515" stroke-width="0.8"/><circle cx="651.5" cy="605.7" r="2.9" fill="#d0d05c" stroke="#151515" stroke-width="0.8"/><circle cx="936.8" cy="172.4" r="2.9" fill="#6ccf6c" stroke="#151515" stroke-width="0.8"/><circle cx="804.4" cy="199.5" r="2.9" fill="#d0d05c" stroke="#151515" stroke-width="0.8"/><circle cx="804.4" cy="211.4" r="2.9" fill="#c2c2c2" stroke="#151515" stroke-width="0.8"/><circle cx="804.4" cy="224.3" r="2.9" fill="#c2c2c2" stroke="#151515" stroke-width="0.8"/><circle cx="804.4" cy="249.5" r="2.9" fill="#7c7cd2" stroke="#151515" stroke-width="0.8"/><circle cx="804.4" cy="237" r="2.9" fill="#c2c2c2" stroke="#151515" stroke-width="0.8"/><circle cx="972.7" cy="181.8" r="2.9" fill="#6ccf6c" stroke="#151515" stroke-width="0.8"/><circle cx="972.7" cy="194.7" r="2.9" fill="#6ccf6c" stroke="#151515" stroke-width="0.8"/><circle cx="972.7" cy="207.6" r="2.9" fill="#7c7cd2" stroke="#151515" stroke-width="0.8"/><circle cx="443.7" cy="362.5" r="2.9" fill="#7c7cd2" stroke="#151515" stroke-width="0.8"/></svg>
</body></html>
